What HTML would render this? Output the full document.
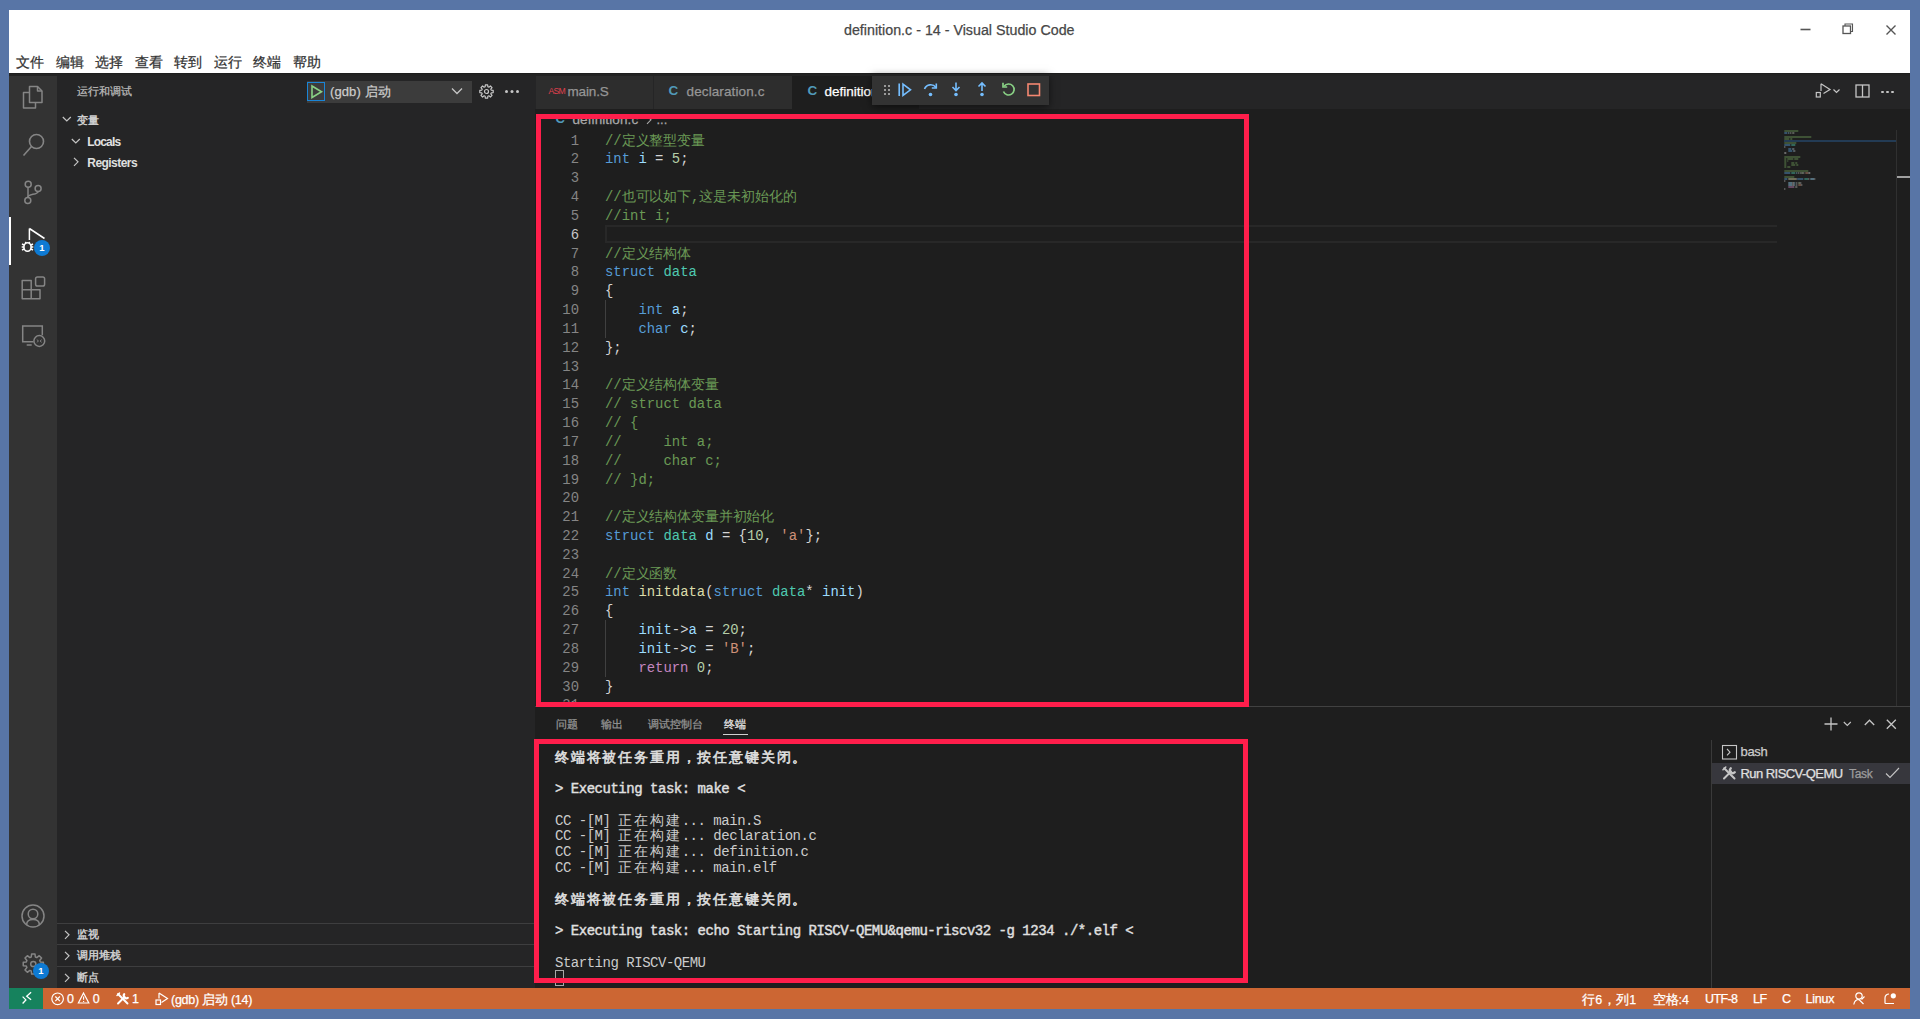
<!DOCTYPE html>
<html><head><meta charset="utf-8">
<style>
*{box-sizing:border-box;margin:0;padding:0}
html,body{width:1920px;height:1019px;overflow:hidden;background:#5875a6;font-family:"Liberation Sans",sans-serif;position:relative}
.a{position:absolute;white-space:pre;-webkit-text-stroke-width:0.25px}
svg{position:absolute;overflow:visible}
.a[style*="bold"]{-webkit-text-stroke-width:0}
.ns{-webkit-text-stroke-width:0 !important}
#code{position:absolute;left:605px;top:131.6px;font-family:"Liberation Mono",monospace;font-size:13.92px;line-height:18.83px;color:#d4d4d4;white-space:pre}
#lnum{position:absolute;left:530px;width:49px;top:131.6px;font-family:"Liberation Mono",monospace;font-size:13.92px;line-height:18.83px;color:#858585;text-align:right;white-space:pre}
.c{color:#6a9955}.k{color:#569cd6}.v{color:#9cdcfe}.t{color:#4ec9b0}.f{color:#dcdcaa}.n{color:#b5cea8}.s{color:#ce9178}.r{color:#c586c0}
#term{position:absolute;left:555px;top:750.5px;font-family:"Liberation Mono",monospace;font-size:14px;letter-spacing:-0.48px;line-height:15.78px;color:#cccccc;white-space:pre}
#term b{font-weight:normal;color:#e0e0e0;-webkit-text-stroke:0.4px #e0e0e0}
.w{display:inline-block;width:15.84px;letter-spacing:0;font-size:13.5px}
#term b .w{-webkit-text-stroke:0.55px #e0e0e0}
.red{position:absolute;border:5px solid #ff1e4b}
.ui{color:#cccccc}
</style></head><body>
<!-- window bg -->
<div class="a" style="left:9px;top:9.6px;width:1901px;height:63.8px;background:#fff"></div>
<div class="a" style="left:9px;top:73px;width:1901px;height:915px;background:#1e1e1e"></div>
<div class="a" style="left:844px;top:22.3px;font-size:14.28px;color:#474747">definition.c - 14 - Visual Studio Code</div>
<svg style="left:1800px;top:24px" width="12" height="12"><path d="M0.5 5.5H10.5" stroke="#555" stroke-width="1.6"/></svg>
<svg style="left:1842px;top:23px" width="12" height="12"><rect x="1" y="3" width="7.5" height="7.5" fill="none" stroke="#555" stroke-width="1.3"/><path d="M3 3V1H10.5V8.5H8.5" fill="none" stroke="#555" stroke-width="1.1"/></svg>
<svg style="left:1886px;top:25px" width="10" height="10"><path d="M0.5 0.5L9.5 9.5M9.5 0.5L0.5 9.5" stroke="#555" stroke-width="1.4"/></svg>
<div class="a" style="left:15.5px;top:54px;font-size:14px;color:#333">文件</div>
<div class="a" style="left:55.5px;top:54px;font-size:14px;color:#333">编辑</div>
<div class="a" style="left:95px;top:54px;font-size:14px;color:#333">选择</div>
<div class="a" style="left:134.5px;top:54px;font-size:14px;color:#333">查看</div>
<div class="a" style="left:174px;top:54px;font-size:14px;color:#333">转到</div>
<div class="a" style="left:213.5px;top:54px;font-size:14px;color:#333">运行</div>
<div class="a" style="left:253px;top:54px;font-size:14px;color:#333">终端</div>
<div class="a" style="left:292.5px;top:54px;font-size:14px;color:#333">帮助</div>
<!-- activity bar -->
<div class="a" style="left:9px;top:74px;width:48px;height:914px;background:#333"></div>
<div class="a" style="left:9px;top:216.5px;width:2px;height:48px;background:#fff"></div>
<svg style="left:21px;top:85px" width="24" height="24" fill="none" stroke="#858585" stroke-width="1.5" stroke-linejoin="round">
 <path d="M8.5 1.5H16.5L21 6V17.5H8.5Z"/><path d="M16.5 1.5V6H21"/><path d="M8.5 7.5H2.5V23H14.5V17.5"/></svg>
<svg style="left:21px;top:133px" width="24" height="24" fill="none" stroke="#858585" stroke-width="1.6">
 <circle cx="15.5" cy="8.5" r="7"/><path d="M10.5 13.5L2.5 22.5"/></svg>
<svg style="left:21px;top:180px" width="24" height="24" fill="none" stroke="#858585" stroke-width="1.5">
 <circle cx="7.2" cy="4.2" r="3"/><circle cx="17.1" cy="8.4" r="3"/><circle cx="6.8" cy="20.4" r="3"/><path d="M7 7.2V17.4"/><path d="M17 11.4C17 15 7 13.5 7 17"/></svg>
<svg style="left:21px;top:228px" width="26" height="26" fill="none" stroke="#fff" stroke-width="1.5">
 <path d="M8.4 0.5V12M8.4 0.5L23.5 10.5"/>
 <g transform="translate(0.5 1.5)"><ellipse cx="6" cy="17.5" rx="3.6" ry="4.3" stroke-width="1.6"/><path d="M0.5 14.5L2.5 15.5M0.5 20.5L2.5 19.5M0.2 17.5H2.4M11.5 14.5L9.5 15.5M11.5 20.5L9.5 19.5M11.8 17.5H9.6M3.8 12.5L4.8 13.8M8.2 12.5L7.2 13.8"/></g>
</svg>
<div class="a" style="left:34px;top:240px;width:16px;height:16px;border-radius:8px;background:#0e7ad3;color:#fff;font-size:9.5px;font-weight:bold;text-align:center;line-height:16px">1</div>
<svg style="left:21px;top:275px" width="26" height="26" fill="none" stroke="#858585" stroke-width="1.5" stroke-linejoin="round"><path d="M1.2 5.5H10.2V14.8H19V23.7H1.2Z"/><path d="M1.2 14.8H10.2V23.7"/><rect x="14.6" y="2" width="9" height="9" rx="1.8"/></svg>
<svg style="left:21px;top:323px" width="26" height="26" fill="none" stroke="#858585" stroke-width="1.5"><path d="M12.3 18.8H1.7V3H21.3V12.3"/><path d="M5.7 22H10.7"/><circle cx="18.3" cy="18" r="5.4"/><path d="M16.2 16.6L17.3 18L16.2 19.4M20.4 16.6L19.3 18L20.4 19.4" stroke-width="1"/></svg>
<svg style="left:21px;top:904px" width="24" height="24" fill="none" stroke="#858585" stroke-width="1.5"><circle cx="12" cy="12" r="11"/><circle cx="12" cy="10" r="4.8"/><path d="M5.6 20.6Q5.8 15.6 12 15.6Q18.2 15.6 18.4 20.6"/></svg>
<svg style="left:21px;top:951px" width="26" height="26" fill="none" stroke="#858585" stroke-width="1.5" stroke-linejoin="round"><path d="M10.25 5.99L10.63 2.94L13.97 2.94L14.35 5.99L15.80 6.60L18.23 4.70L20.60 7.07L18.70 9.50L19.31 10.95L22.36 11.33L22.36 14.67L19.31 15.05L18.70 16.50L20.60 18.93L18.23 21.30L15.80 19.40L14.35 20.01L13.97 23.06L10.63 23.06L10.25 20.01L8.80 19.40L6.37 21.30L4.00 18.93L5.90 16.50L5.29 15.05L2.24 14.67L2.24 11.33L5.29 10.95L5.90 9.50L4.00 7.07L6.37 4.70L8.80 6.60Z"/><circle cx="12.3" cy="13" r="2.6"/></svg>
<div class="a" style="left:33px;top:963.3px;width:16px;height:16px;border-radius:8px;background:#0e7ad3;color:#fff;font-size:9.5px;font-weight:bold;text-align:center;line-height:16px">1</div>
<!-- sidebar -->
<div class="a" style="left:57px;top:74px;width:478px;height:914px;background:#252526"></div>
<div class="a" style="left:76.5px;top:84px;font-size:11px;color:#bbbbbb">运行和调试</div>
<div class="a" style="left:307px;top:81px;width:165px;height:22px;background:#3c3c3c"></div>
<div class="a" style="left:307px;top:82px;width:18px;height:19px;border:1px solid #1a85d6"></div>
<svg style="left:311px;top:85px" width="12" height="14" fill="none" stroke="#89d185" stroke-width="1.6"><path d="M1 1L10.5 6.8L1 12.5Z"/></svg>
<div class="a ui" style="left:330px;top:83px;font-size:13px;letter-spacing:0.1px">(gdb) 启动</div>
<svg style="left:451px;top:87px" width="12" height="8" fill="none" stroke="#c5c5c5" stroke-width="1.3"><path d="M1 1.5L6 6.5L11 1.5"/></svg>
<svg style="left:479px;top:84px" width="15" height="15" fill="none" stroke="#c5c5c5" stroke-width="1.2" stroke-linejoin="round"><path d="M6.12 2.80L6.38 0.79L8.62 0.79L8.88 2.80L9.85 3.20L11.45 1.97L13.03 3.55L11.80 5.15L12.20 6.12L14.21 6.38L14.21 8.62L12.20 8.88L11.80 9.85L13.03 11.45L11.45 13.03L9.85 11.80L8.88 12.20L8.62 14.21L6.38 14.21L6.12 12.20L5.15 11.80L3.55 13.03L1.97 11.45L3.20 9.85L2.80 8.88L0.79 8.62L0.79 6.38L2.80 6.12L3.20 5.15L1.97 3.55L3.55 1.97L5.15 3.20Z"/><circle cx="7.5" cy="7.5" r="2"/></svg>
<div class="a" style="left:505px;top:90px;width:3px;height:3px;border-radius:2px;background:#c5c5c5;box-shadow:5.5px 0 0 #c5c5c5,11px 0 0 #c5c5c5"></div>

<svg style="left:62px;top:116px" width="10" height="7" fill="none" stroke="#c5c5c5" stroke-width="1.2"><path d="M0.8 1L4.8 5L8.8 1"/></svg>
<div class="a" style="left:76.5px;top:112.5px;font-size:11px;font-weight:bold;color:#cccccc">变量</div>
<svg style="left:71px;top:138px" width="10" height="7" fill="none" stroke="#c5c5c5" stroke-width="1.2"><path d="M0.8 1L4.8 5L8.8 1"/></svg>
<div class="a" style="left:87.3px;top:134.8px;font-size:12px;font-weight:bold;color:#e0e0e0;letter-spacing:-0.85px">Locals</div>
<svg style="left:73px;top:157px" width="7" height="11" fill="none" stroke="#c5c5c5" stroke-width="1.2"><path d="M1 0.8L5 4.8L1 8.8"/></svg>
<div class="a" style="left:87.3px;top:156.3px;font-size:12px;font-weight:bold;color:#e0e0e0;letter-spacing:-0.55px">Registers</div>

<div class="a" style="left:57px;top:922.5px;width:478px;height:1px;background:#3e3e3f"></div>
<svg style="left:64px;top:929.5px" width="7" height="11" fill="none" stroke="#c5c5c5" stroke-width="1.2"><path d="M1 0.8L5 4.8L1 8.8"/></svg>
<div class="a" style="left:76.8px;top:927px;font-size:11px;font-weight:bold;color:#cccccc">监视</div>
<div class="a" style="left:57px;top:944.2px;width:478px;height:1px;background:#3e3e3f"></div>
<svg style="left:64px;top:950.5px" width="7" height="11" fill="none" stroke="#c5c5c5" stroke-width="1.2"><path d="M1 0.8L5 4.8L1 8.8"/></svg>
<div class="a" style="left:76.8px;top:948px;font-size:11px;font-weight:bold;color:#cccccc">调用堆栈</div>
<div class="a" style="left:57px;top:965.8px;width:478px;height:1px;background:#3e3e3f"></div>
<svg style="left:64px;top:972.5px" width="7" height="11" fill="none" stroke="#c5c5c5" stroke-width="1.2"><path d="M1 0.8L5 4.8L1 8.8"/></svg>
<div class="a" style="left:76.8px;top:970px;font-size:11px;font-weight:bold;color:#cccccc">断点</div>
<!-- tabs -->
<div class="a" style="left:535px;top:74px;width:1375px;height:35px;background:#252526"></div>
<div class="a" style="left:536px;top:74px;width:117px;height:35px;background:#2d2d2d"></div>
<div class="a" style="left:654px;top:74px;width:138px;height:35px;background:#2d2d2d"></div>
<div class="a" style="left:792px;top:74px;width:127px;height:35px;background:#1e1e1e"></div>
<div class="a ns" style="left:548.5px;top:85.5px;font-size:8.6px;color:#e0404e;letter-spacing:-0.75px">ASM</div>
<div class="a" style="left:567.5px;top:84.2px;font-size:13.5px;color:#969696;letter-spacing:-0.14px">main.S</div>
<div class="a" style="left:668.5px;top:82.5px;font-size:13.5px;font-weight:bold;color:#519aba">C</div>
<div class="a" style="left:686.5px;top:84.2px;font-size:13.5px;color:#969696;letter-spacing:0.12px">declaration.c</div>
<div class="a" style="left:807.5px;top:82.5px;font-size:13.5px;font-weight:bold;color:#519aba">C</div>
<div class="a" style="left:824.5px;top:84.2px;font-size:13.5px;color:#ffffff;letter-spacing:0px">definition.c</div>
<!-- debug toolbar -->
<div class="a" style="left:872px;top:74px;width:177px;height:31px;background:#333333;box-shadow:0 2px 8px rgba(0,0,0,0.55)"></div>
<div class="a" style="left:883.5px;top:84.5px;width:2.5px;height:2.5px;background:#9a9a9a;box-shadow:4px 0 0 #9a9a9a,0 4px 0 #9a9a9a,4px 4px 0 #9a9a9a,0 8px 0 #9a9a9a,4px 8px 0 #9a9a9a"></div>
<svg style="left:898px;top:83px" width="14" height="14" fill="none" stroke="#75beff" stroke-width="1.6"><path d="M1.2 0.5V13"/><path d="M5 1.2L12.5 6.8L5 12.3Z"/></svg>
<svg style="left:923px;top:82px" width="16" height="16" fill="none" stroke="#75beff" stroke-width="1.6"><path d="M1.5 7C3.5 2 10 1.5 13 5.5"/><path d="M13.3 1.5V6H8.8"/><circle cx="7.5" cy="12.5" r="1.8" fill="#75beff" stroke="none"/></svg>
<svg style="left:949px;top:82px" width="14" height="16" fill="none" stroke="#75beff" stroke-width="1.6"><path d="M7 0.5V8M3.5 5L7 8.5L10.5 5"/><circle cx="7" cy="12.5" r="1.8" fill="#75beff" stroke="none"/></svg>
<svg style="left:975px;top:82px" width="14" height="16" fill="none" stroke="#75beff" stroke-width="1.6"><path d="M7 1.5V9M3.5 4.5L7 1L10.5 4.5"/><circle cx="7" cy="12.5" r="1.8" fill="#75beff" stroke="none"/></svg>
<svg style="left:1001px;top:82px" width="15" height="15" fill="none" stroke="#89d185" stroke-width="1.7"><path d="M3.2 4.2A5.5 5.5 0 1 1 2.5 9.5"/><path d="M2 0.8V5H6.2"/></svg>
<svg style="left:1027px;top:82.5px" width="14" height="14" fill="none" stroke="#f48771" stroke-width="1.6"><rect x="1" y="1" width="11.5" height="11.5"/></svg>
<!-- editor actions -->
<svg style="left:1814px;top:83px" width="30" height="16" fill="none" stroke="#c5c5c5" stroke-width="1.2"><path d="M7 0.8V8M7 0.8L16 6.5L9.5 10.5"/><rect x="2.3" y="9.5" width="4" height="4.5"/><path d="M19.5 6.5L22.5 9.5L25.5 6.5"/></svg>
<svg style="left:1855px;top:84px" width="15" height="15" fill="none" stroke="#c5c5c5" stroke-width="1.3"><rect x="1" y="1" width="13" height="12"/><path d="M7.5 1V13"/></svg>
<div class="a" style="left:1881px;top:90.5px;width:2.5px;height:2.5px;border-radius:2px;background:#c5c5c5;box-shadow:5px 0 0 #c5c5c5,10px 0 0 #c5c5c5"></div>
<!-- breadcrumbs -->
<div class="a" style="left:555.5px;top:111px;font-size:13px;font-weight:bold;color:#519aba">C</div>
<div class="a" style="left:572.5px;top:111.5px;font-size:13.5px;color:#a9a9a9;letter-spacing:0.1px">definition.c</div>
<svg style="left:646px;top:115px" width="7" height="11" fill="none" stroke="#a9a9a9" stroke-width="1.1"><path d="M1 0.8L5 4.8L1 8.8"/></svg>
<div class="a" style="left:656.5px;top:112px;font-size:13px;color:#a9a9a9">...</div>
<!-- current line -->
<div class="a" style="left:605px;top:224.5px;width:1172px;height:18.5px;border:2px solid #282828;border-right:none"></div>
<!-- indent guides -->
<div class="a" style="left:605px;top:300px;width:1px;height:37.7px;background:#404040"></div>
<div class="a" style="left:605px;top:620px;width:1px;height:56.5px;background:#404040"></div>
<div id="lnum">1
2
3
4
5
<span style="color:#c6c6c6">6</span>
7
8
9
10
11
12
13
14
15
16
17
18
19
20
21
22
23
24
25
26
27
28
29
30
31</div>
<div id="code"><span class="c">//<span style="letter-spacing:-0.14px">定义整型变量</span></span>
<span class="k">int</span> <span class="v">i</span> = <span class="n">5</span>;

<span class="c">//<span style="letter-spacing:-0.14px">也可以如下</span>,<span style="letter-spacing:-0.14px">这是未初始化的</span></span>
<span class="c">//int i;</span>

<span class="c">//<span style="letter-spacing:-0.14px">定义结构体</span></span>
<span class="k">struct</span> <span class="t">data</span>
{
    <span class="k">int</span> <span class="v">a</span>;
    <span class="k">char</span> <span class="v">c</span>;
};

<span class="c">//<span style="letter-spacing:-0.14px">定义结构体变量</span></span>
<span class="c">// struct data</span>
<span class="c">// {</span>
<span class="c">//     int a;</span>
<span class="c">//     char c;</span>
<span class="c">// }d;</span>

<span class="c">//<span style="letter-spacing:-0.14px">定义结构体变量并初始化</span></span>
<span class="k">struct</span> <span class="t">data</span> <span class="v">d</span> = {<span class="n">10</span>, <span class="s">'a'</span>};

<span class="c">//<span style="letter-spacing:-0.14px">定义函数</span></span>
<span class="k">int</span> <span class="f">initdata</span>(<span class="k">struct</span> <span class="t">data</span>* <span class="v">init</span>)
{
    <span class="v">init</span>-&gt;<span class="v">a</span> = <span class="n">20</span>;
    <span class="v">init</span>-&gt;<span class="v">c</span> = <span class="s">'B'</span>;
    <span class="r">return</span> <span class="n">0</span>;
}
</div>
<!-- clip bottom of editor -->
<!-- minimap -->
<div class="a" style="left:1784px;top:139.8px;width:112px;height:2px;background:#264f78;opacity:0.6"></div>
<svg style="left:1784px;top:129.8px;opacity:0.42" width="112" height="70"><rect x="0.3" y="0.0" width="14.0" height="2" fill="#6a9955"/><rect x="0.3" y="2.0" width="3.0" height="2" fill="#569cd6"/><rect x="4.3" y="2.0" width="1.0" height="2" fill="#9cdcfe"/><rect x="6.3" y="2.0" width="1.0" height="2" fill="#d4d4d4"/><rect x="8.3" y="2.0" width="1.0" height="2" fill="#b5cea8"/><rect x="9.3" y="2.0" width="1.0" height="2" fill="#d4d4d4"/><rect x="0.3" y="6.0" width="27.0" height="2" fill="#6a9955"/><rect x="0.3" y="8.0" width="5.0" height="2" fill="#6a9955"/><rect x="6.3" y="8.0" width="2.0" height="2" fill="#6a9955"/><rect x="0.3" y="12.0" width="12.0" height="2" fill="#6a9955"/><rect x="0.3" y="14.0" width="6.0" height="2" fill="#569cd6"/><rect x="7.3" y="14.0" width="4.0" height="2" fill="#4ec9b0"/><rect x="0.3" y="16.0" width="1.0" height="2" fill="#d4d4d4"/><rect x="4.3" y="18.0" width="3.0" height="2" fill="#569cd6"/><rect x="8.3" y="18.0" width="1.0" height="2" fill="#9cdcfe"/><rect x="9.3" y="18.0" width="1.0" height="2" fill="#d4d4d4"/><rect x="4.3" y="20.0" width="4.0" height="2" fill="#569cd6"/><rect x="9.3" y="20.0" width="1.0" height="2" fill="#9cdcfe"/><rect x="10.3" y="20.0" width="1.0" height="2" fill="#d4d4d4"/><rect x="0.3" y="22.0" width="2.0" height="2" fill="#d4d4d4"/><rect x="0.3" y="26.0" width="16.0" height="2" fill="#6a9955"/><rect x="0.3" y="28.0" width="2.0" height="2" fill="#6a9955"/><rect x="3.3" y="28.0" width="6.0" height="2" fill="#6a9955"/><rect x="10.3" y="28.0" width="4.0" height="2" fill="#6a9955"/><rect x="0.3" y="30.0" width="2.0" height="2" fill="#6a9955"/><rect x="3.3" y="30.0" width="1.0" height="2" fill="#6a9955"/><rect x="0.3" y="32.0" width="2.0" height="2" fill="#6a9955"/><rect x="7.3" y="32.0" width="3.0" height="2" fill="#6a9955"/><rect x="11.3" y="32.0" width="2.0" height="2" fill="#6a9955"/><rect x="0.3" y="34.0" width="2.0" height="2" fill="#6a9955"/><rect x="7.3" y="34.0" width="4.0" height="2" fill="#6a9955"/><rect x="12.3" y="34.0" width="2.0" height="2" fill="#6a9955"/><rect x="0.3" y="36.0" width="2.0" height="2" fill="#6a9955"/><rect x="3.3" y="36.0" width="3.0" height="2" fill="#6a9955"/><rect x="0.3" y="40.0" width="24.0" height="2" fill="#6a9955"/><rect x="0.3" y="42.0" width="6.0" height="2" fill="#569cd6"/><rect x="7.3" y="42.0" width="4.0" height="2" fill="#4ec9b0"/><rect x="12.3" y="42.0" width="1.0" height="2" fill="#9cdcfe"/><rect x="14.3" y="42.0" width="1.0" height="2" fill="#d4d4d4"/><rect x="16.3" y="42.0" width="1.0" height="2" fill="#d4d4d4"/><rect x="17.3" y="42.0" width="2.0" height="2" fill="#b5cea8"/><rect x="19.3" y="42.0" width="1.0" height="2" fill="#d4d4d4"/><rect x="21.3" y="42.0" width="3.0" height="2" fill="#ce9178"/><rect x="24.3" y="42.0" width="2.0" height="2" fill="#d4d4d4"/><rect x="0.3" y="46.0" width="10.0" height="2" fill="#6a9955"/><rect x="0.3" y="48.0" width="3.0" height="2" fill="#569cd6"/><rect x="4.3" y="48.0" width="8.0" height="2" fill="#dcdcaa"/><rect x="12.3" y="48.0" width="1.0" height="2" fill="#d4d4d4"/><rect x="13.3" y="48.0" width="6.0" height="2" fill="#569cd6"/><rect x="20.3" y="48.0" width="4.0" height="2" fill="#4ec9b0"/><rect x="24.3" y="48.0" width="1.0" height="2" fill="#d4d4d4"/><rect x="26.3" y="48.0" width="4.0" height="2" fill="#9cdcfe"/><rect x="30.3" y="48.0" width="1.0" height="2" fill="#d4d4d4"/><rect x="0.3" y="50.0" width="1.0" height="2" fill="#d4d4d4"/><rect x="4.3" y="52.0" width="4.0" height="2" fill="#9cdcfe"/><rect x="8.3" y="52.0" width="2.0" height="2" fill="#d4d4d4"/><rect x="10.3" y="52.0" width="1.0" height="2" fill="#9cdcfe"/><rect x="12.3" y="52.0" width="1.0" height="2" fill="#d4d4d4"/><rect x="14.3" y="52.0" width="2.0" height="2" fill="#b5cea8"/><rect x="16.3" y="52.0" width="1.0" height="2" fill="#d4d4d4"/><rect x="4.3" y="54.0" width="4.0" height="2" fill="#9cdcfe"/><rect x="8.3" y="54.0" width="2.0" height="2" fill="#d4d4d4"/><rect x="10.3" y="54.0" width="1.0" height="2" fill="#9cdcfe"/><rect x="12.3" y="54.0" width="1.0" height="2" fill="#d4d4d4"/><rect x="14.3" y="54.0" width="3.0" height="2" fill="#ce9178"/><rect x="17.3" y="54.0" width="1.0" height="2" fill="#d4d4d4"/><rect x="4.3" y="56.0" width="6.0" height="2" fill="#c586c0"/><rect x="11.3" y="56.0" width="1.0" height="2" fill="#b5cea8"/><rect x="12.3" y="56.0" width="1.0" height="2" fill="#d4d4d4"/><rect x="0.3" y="58.0" width="1.0" height="2" fill="#d4d4d4"/></svg>
<!-- scrollbar -->
<div class="a" style="left:1896px;top:130px;width:1px;height:576px;background:#303030"></div>
<div class="a" style="left:1897px;top:176px;width:13px;height:2px;background:#a0a0a0"></div>
<!-- panel -->
<div class="a" style="left:535px;top:706px;width:1375px;height:282px;background:#1e1e1e;border-top:1px solid #414141"></div>
<div class="a" style="left:555.5px;top:717px;font-size:11px;color:#969696">问题</div>
<div class="a" style="left:601px;top:717px;font-size:11px;color:#969696">输出</div>
<div class="a" style="left:647.5px;top:717px;font-size:11px;color:#969696">调试控制台</div>
<div class="a" style="left:724.4px;top:717px;font-size:11px;color:#e7e7e7">终端</div>
<div class="a" style="left:722.5px;top:734px;width:25.5px;height:1px;background:#d0d0d0"></div>
<svg style="left:1824px;top:717px" width="14" height="14" fill="none" stroke="#c5c5c5" stroke-width="1.3"><path d="M7 0.5V13.5M0.5 7H13.5"/></svg>
<svg style="left:1843px;top:721px" width="9" height="6" fill="none" stroke="#c5c5c5" stroke-width="1.1"><path d="M0.8 1L4.3 4.5L7.8 1"/></svg>
<svg style="left:1864px;top:719px" width="12" height="8" fill="none" stroke="#c5c5c5" stroke-width="1.3"><path d="M0.8 6L5.5 1.2L10.2 6"/></svg>
<svg style="left:1886px;top:718.5px" width="11" height="11" fill="none" stroke="#c5c5c5" stroke-width="1.3"><path d="M0.8 0.8L9.8 9.8M9.8 0.8L0.8 9.8"/></svg>
<!-- terminal list -->
<div class="a" style="left:1710.5px;top:740px;width:1px;height:248px;background:#3a3a3a"></div>
<svg style="left:1722px;top:745px" width="15" height="15" fill="none" stroke="#c5c5c5" stroke-width="1.1"><rect x="0.5" y="0.5" width="14" height="13.5"/><path d="M5 4L8 7.2L5 10.4"/></svg>
<div class="a" style="left:1740.5px;top:744px;font-size:13px;color:#cccccc;letter-spacing:-0.3px">bash</div>
<div class="a" style="left:1712px;top:762.5px;width:198px;height:21.5px;background:#37373d"></div>
<svg style="left:1722px;top:766px" width="15" height="15" fill="none" stroke="#c5c5c5" stroke-width="2" stroke-linecap="round"><path d="M2 12.5L9 5.5"/><path d="M8.8 2.2A2.8 2.8 0 0 0 12.8 6.2" stroke-width="2.3"/><path d="M2.2 2.2L12.5 12.5"/><path d="M1 3.8L3.8 1" stroke-width="1.6"/></svg>
<div class="a" style="left:1740.5px;top:765.5px;font-size:13px;color:#e0e0e0;letter-spacing:-0.55px">Run RISCV-QEMU</div>
<div class="a" style="left:1849px;top:766.5px;font-size:12px;color:#9d9d9d;letter-spacing:-0.3px">Task</div>
<svg style="left:1885px;top:767px" width="15" height="12" fill="none" stroke="#c5c5c5" stroke-width="1.1"><path d="M1 6.5L5 10.5L14 1"/></svg>
<!-- terminal -->
<div id="term"><b><span class="w">终</span><span class="w">端</span><span class="w">将</span><span class="w">被</span><span class="w">任</span><span class="w">务</span><span class="w">重</span><span class="w">用</span><span class="w">，</span><span class="w">按</span><span class="w">任</span><span class="w">意</span><span class="w">键</span><span class="w">关</span><span class="w">闭</span><span class="w">。</span></b>

<b>&gt; Executing task: make &lt;</b>

CC -[M] <span class="w">正</span><span class="w">在</span><span class="w">构</span><span class="w">建</span>... main.S
CC -[M] <span class="w">正</span><span class="w">在</span><span class="w">构</span><span class="w">建</span>... declaration.c
CC -[M] <span class="w">正</span><span class="w">在</span><span class="w">构</span><span class="w">建</span>... definition.c
CC -[M] <span class="w">正</span><span class="w">在</span><span class="w">构</span><span class="w">建</span>... main.elf

<b><span class="w">终</span><span class="w">端</span><span class="w">将</span><span class="w">被</span><span class="w">任</span><span class="w">务</span><span class="w">重</span><span class="w">用</span><span class="w">，</span><span class="w">按</span><span class="w">任</span><span class="w">意</span><span class="w">键</span><span class="w">关</span><span class="w">闭</span><span class="w">。</span></b>

<b>&gt; Executing task: echo Starting RISCV-QEMU&amp;qemu-riscv32 -g 1234 ./*.elf &lt;</b>

Starting RISCV-QEMU</div>
<div class="a" style="left:555px;top:970px;width:8.5px;height:16px;border:1px solid #a8a8a8"></div>
<!-- status bar -->
<div class="a" style="left:9px;top:988px;width:1901px;height:21px;background:#cc6633"></div>
<div class="a" style="left:9px;top:988px;width:34px;height:21px;background:#16825d"></div>
<svg style="left:21px;top:991px" width="12" height="14" fill="none" stroke="#fff" stroke-width="1.3"><path d="M10.1 1.3L5.7 5.2L10.1 8.7M1.6 5.6L4.9 8.9L1.6 12.5"/></svg>
<svg style="left:51px;top:992px" width="14" height="14" fill="none" stroke="#fff" stroke-width="1.2"><circle cx="6.6" cy="6.8" r="5.8"/><path d="M4.3 4.5L8.9 9.1M8.9 4.5L4.3 9.1"/></svg>
<div class="a" style="left:67px;top:992px;font-size:12.5px;color:#fff">0</div>
<svg style="left:78px;top:991.5px" width="13" height="13" fill="none" stroke="#fff" stroke-width="1.2"><path d="M5.5 1L10.8 11H0.4Z"/><path d="M5.6 4.5V7.8M5.6 9V10" stroke-width="1.1"/></svg>
<div class="a" style="left:92.7px;top:992px;font-size:12.5px;color:#fff">0</div>
<svg style="left:116px;top:992px" width="14" height="14" fill="none" stroke="#fff" stroke-width="1.9" stroke-linecap="round"><path d="M2 11.5L8.5 5"/><path d="M8.2 2.2A2.6 2.6 0 0 0 11.8 5.8" stroke-width="2.2"/><path d="M2 2L11.5 11.5"/><path d="M1 3.5L3.5 1" stroke-width="1.5"/></svg>
<div class="a" style="left:132px;top:992px;font-size:12.5px;color:#fff">1</div>
<svg style="left:155px;top:992px" width="14" height="14" fill="none" stroke="#fff" stroke-width="1.2"><path d="M4 1V6.5M4 1L12.5 6.5L6.5 10.5"/><rect x="1" y="8" width="4.5" height="4.5"/></svg>
<div class="a" style="left:171px;top:992px;font-size:12.5px;color:#fff;letter-spacing:-0.25px">(gdb) 启动 (14)</div>

<div class="a" style="left:1582px;top:992px;font-size:12.5px;color:#fff;letter-spacing:0.3px">行6，列1</div>
<div class="a" style="left:1652.5px;top:992px;font-size:12.5px;color:#fff;letter-spacing:0px">空格:4</div>
<div class="a" style="left:1705px;top:992px;font-size:12.5px;color:#fff;letter-spacing:-0.6px">UTF-8</div>
<div class="a" style="left:1753px;top:992px;font-size:12.5px;color:#fff;letter-spacing:-0.5px">LF</div>
<div class="a" style="left:1782px;top:992px;font-size:12.5px;color:#fff">C</div>
<div class="a" style="left:1805.5px;top:992px;font-size:12.5px;color:#fff;letter-spacing:-0.2px">Linux</div>
<svg style="left:1853px;top:992px" width="13" height="13" fill="none" stroke="#fff" stroke-width="1.2"><circle cx="6" cy="4" r="3.2"/><path d="M0.8 12.5C1.5 8.5 4 7.5 6 7.5L10.5 12M8.5 7.5L11.5 4.5"/></svg>
<svg style="left:1883px;top:991.5px" width="14" height="14" fill="none" stroke="#fff" stroke-width="1.2"><path d="M2 11.5L2 6C2 3.5 4 2 6 2M2 11.5H11"/><circle cx="10.3" cy="3.8" r="2.6" fill="#fff" stroke="none"/></svg>
<div id="tline" class="a" style="left:9px;top:73.5px;width:1901px;height:2.3px;background:#232323"></div>
<!-- red rectangles -->
<div class="red" style="left:536px;top:114px;width:712.5px;height:593px"></div>
<div class="red" style="left:533.5px;top:738.5px;width:714.5px;height:244.5px"></div>
</body></html>
